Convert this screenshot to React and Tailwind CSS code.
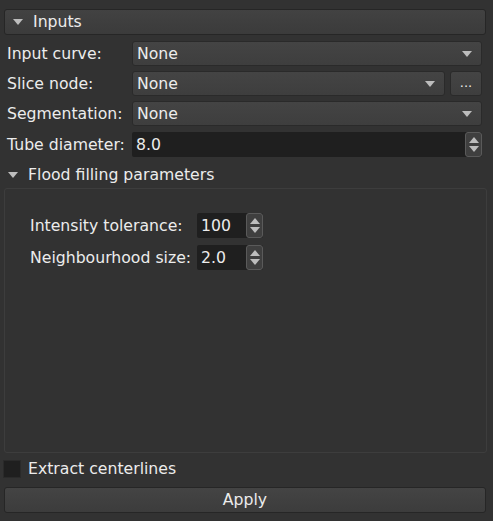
import React from "react";

const font = { fontFamily: '"DejaVu Sans", sans-serif' };

function Tri({ down = true, className = "" }) {
  return (
    <svg width="10" height="6" viewBox="0 0 10 6" className={className}>
      {down ? <path d="M0 0 H10 L5 6 Z" fill="#bdbdbd" /> : <path d="M0 6 H10 L5 0 Z" fill="#bdbdbd" />}
    </svg>
  );
}

function Combo({ className = "" }) {
  return (
    <div className={"h-[25px] flex items-center justify-between rounded-[3px] border border-[#2a2a2a] bg-gradient-to-b from-[#444444] to-[#3e3e3e] pl-[4px] pr-[9px] " + className}>
      <span>None</span>
      <Tri />
    </div>
  );
}

function SpinButtons() {
  return (
    <div className="w-[17px] h-full flex flex-col items-center justify-center gap-[3px] rounded-[3px] border border-[#5a5a5a] bg-[#3f3f3f]">
      <Tri down={false} />
      <Tri />
    </div>
  );
}

function Spin({ value, className = "" }) {
  return (
    <div className={"h-[25px] flex items-center bg-[#1f1f1f] rounded-[2px] " + className}>
      <span className="flex-1 pl-[4px]">{value}</span>
      <SpinButtons />
    </div>
  );
}

export default function App() {
  return (
    <div className="w-[493px] h-[521px] bg-[#323232] text-[#ececec] text-[15.7px] leading-none overflow-hidden" style={font}>
      <div className="pt-[9px] pl-[4px] pr-[7px]">
        <div className="h-[26px] flex items-center rounded-[3px] border border-[#262626] bg-gradient-to-b from-[#424242] to-[#3b3b3b]">
          <Tri className="ml-[8px]" />
          <span className="ml-[10px]">Inputs</span>
        </div>
      </div>

      <div className="pl-[7px] pr-[11px] pt-[6px] flex flex-col gap-[5px]">
        <div className="flex items-center">
          <span className="w-[125px]">Input curve:</span>
          <Combo className="flex-1" />
        </div>
        <div className="flex items-center">
          <span className="w-[125px]">Slice node:</span>
          <Combo className="flex-1" />
          <div className="ml-[5px] w-[32px] h-[25px] rounded-[3px] border border-[#2a2a2a] bg-gradient-to-b from-[#444444] to-[#3e3e3e] flex items-end justify-center pb-[6px] text-[13px]">...</div>
        </div>
        <div className="flex items-center">
          <span className="w-[125px]">Segmentation:</span>
          <Combo className="flex-1" />
        </div>
        <div className="flex items-center mt-[1px]">
          <span className="w-[125px]">Tube diameter:</span>
          <Spin value="8.0" className="flex-1" />
        </div>
      </div>

      <div className="flex items-center h-[31px] pt-[5px] pl-[8px]">
        <Tri />
        <span className="ml-[10px]">Flood filling parameters</span>
      </div>

      <div className="ml-[4px] mr-[6px] h-[265px] rounded-[3px] border border-[#3d3d3d] pt-[24px] pl-[25px] flex flex-col gap-[7px]">
        <div className="flex items-center">
          <span className="w-[167px]">Intensity tolerance:</span>
          <Spin value="100" className="w-[66px]" />
        </div>
        <div className="flex items-center">
          <span className="w-[167px]">Neighbourhood size:</span>
          <Spin value="2.0" className="w-[66px]" />
        </div>
      </div>

      <div className="flex items-center h-[18px] mt-[7px] pl-[3px]">
        <div className="w-[18px] h-[18px] bg-[#1f1f1f] border border-[#2a2a2a]" />
        <span className="ml-[7px]">Extract centerlines</span>
      </div>

      <div className="mt-[9px] ml-[4px] mr-[7px] h-[26px] rounded-[3px] border border-[#262626] bg-gradient-to-b from-[#444444] to-[#3c3c3c] flex items-center justify-center">
        Apply
      </div>
    </div>
  );
}
